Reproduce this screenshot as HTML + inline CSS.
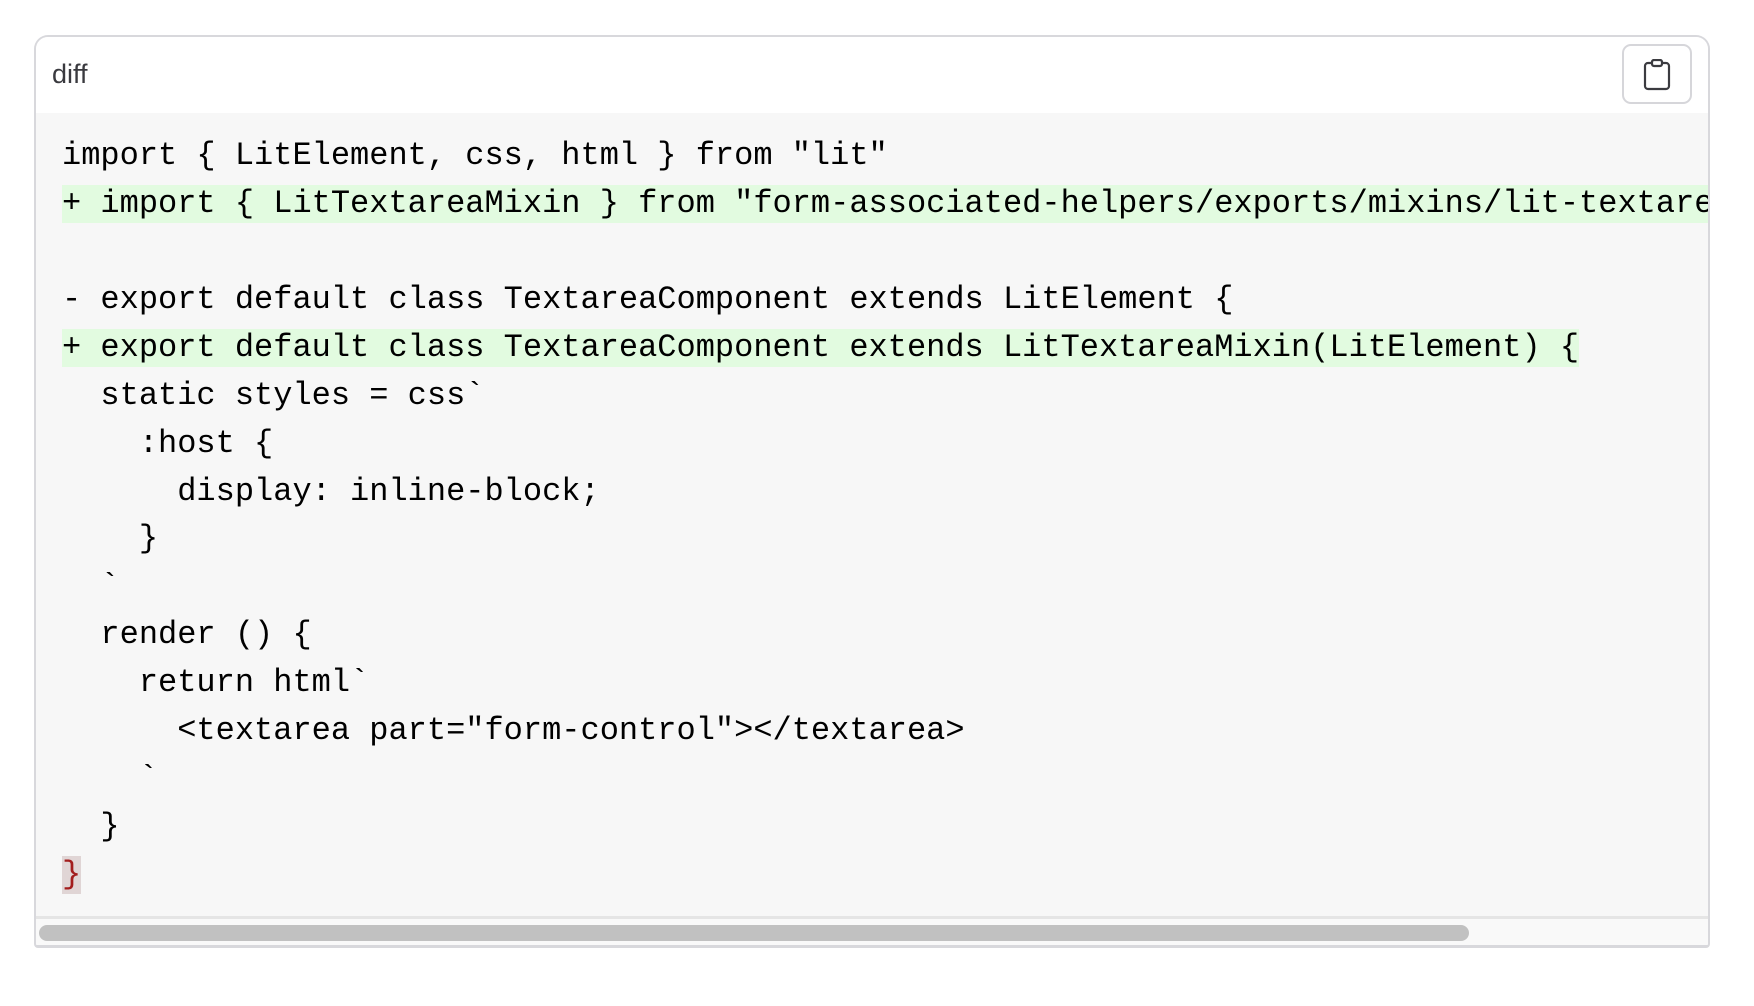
<!DOCTYPE html>
<html><head><meta charset="utf-8"><style>
html,body{margin:0;padding:0;background:#fff;width:1754px;height:1006px;overflow:hidden}
.card{position:absolute;left:34px;top:35px;width:1672px;height:908px;border:2px solid #d8d8dc;border-bottom-width:3px;border-radius:14px 14px 4px 4px;overflow:hidden;background:#fff}
.hdr{position:absolute;left:0;top:0;right:0;height:76px;background:#fff}
.lbl{position:absolute;left:16px;top:22px;font:27px "Liberation Sans",sans-serif;color:#3a3a3f}
.btn{position:absolute;left:1586px;top:7px;width:66px;height:56px;border:2px solid #d6d6da;border-radius:9px;background:#fff}
.btn svg{position:absolute;left:18px;top:13px}
.code{position:absolute;left:0;top:76px;right:0;height:805px;background:#f7f7f7}
pre{margin:0;position:absolute;left:26px;top:19px;font:32px/47.9px "Liberation Mono",monospace;color:#000;white-space:pre}
.add{background:#e2fbe0}
.add.full{display:inline-block;width:1700px;height:38px;line-height:38px;vertical-align:top;margin:5px 0}
.add.in{display:inline-block;height:38px;line-height:38px;vertical-align:top;margin:5px 0}
.del{background:#e0d5d5;color:#a31d1d;display:inline-block;height:38px;line-height:38px;vertical-align:top;margin:5px 0}
.sb{position:absolute;left:0;right:0;top:879px;height:29px;background:#f9f9f9;border-top:3px solid #e5e5e5}
.thumb{position:absolute;left:3px;top:6px;width:1430px;height:16px;border-radius:8px;background:#c1c1c1}
</style></head><body>
<div class="card">
<div class="hdr"><div class="lbl">diff</div>
<div class="btn"><svg width="30" height="32" viewBox="0 0 30 32"><rect x="3" y="4" width="24" height="26" rx="3" fill="none" stroke="#3b3b40" stroke-width="2.2"/><rect x="10" y="1" width="10" height="6" rx="2" fill="#fff" stroke="#3b3b40" stroke-width="2.2"/></svg></div></div>
<div class="code"><pre>import { LitElement, css, html } from "lit"
<span class="add full">+ import { LitTextareaMixin } from "form-associated-helpers/exports/mixins/lit-textarea-mixin.js"</span>

- export default class TextareaComponent extends LitElement {
<span class="add in">+ export default class TextareaComponent extends LitTextareaMixin(LitElement) {</span>
  static styles = css`
    :host {
      display: inline-block;
    }
  `
  render () {
    return html`
      &lt;textarea part="form-control"&gt;&lt;/textarea&gt;
    `
  }
<span class="del">}</span></pre></div>
<div class="sb"><div class="thumb"></div></div>
</div>
</body></html>
